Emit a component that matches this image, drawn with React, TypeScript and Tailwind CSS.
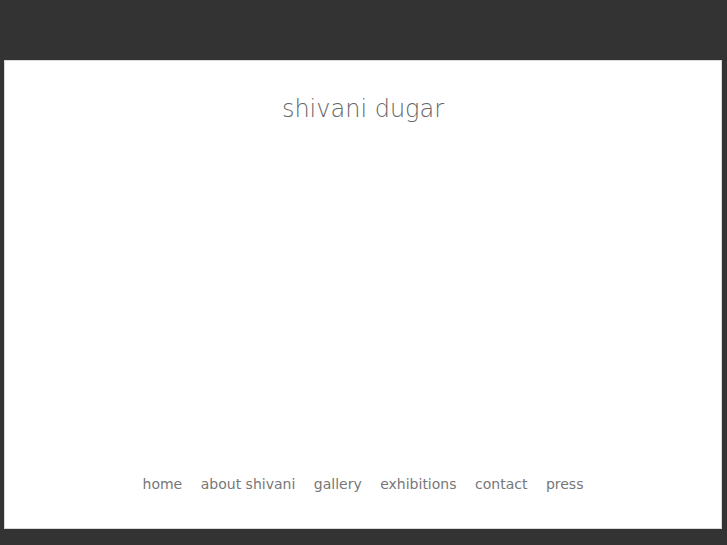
import React from 'react';

const links = ['home', 'about shivani', 'gallery', 'exhibitions', 'contact', 'press'];

export default function App() {
  return (
    <div className="min-h-[545px] w-[727px] bg-[#333333] pt-[60px] pl-[4px]">
      <div className="flex h-[469px] w-[718px] flex-col items-center border border-[#d8d8d8] bg-white">
        <h1 className="mt-[33px] text-[24px] leading-[30px] text-[#666666] [font-family:'DejaVu_Sans',sans-serif] font-light">
          shivani dugar
        </h1>
        <nav className="mt-auto mb-[33px] flex gap-[18.5px] text-[14px] text-[#777777] [font-family:'DejaVu_Sans',sans-serif]">
          {links.map((l) => (
            <a key={l} href="#" className="hover:text-[#333]">
              {l}
            </a>
          ))}
        </nav>
      </div>
    </div>
  );
}
